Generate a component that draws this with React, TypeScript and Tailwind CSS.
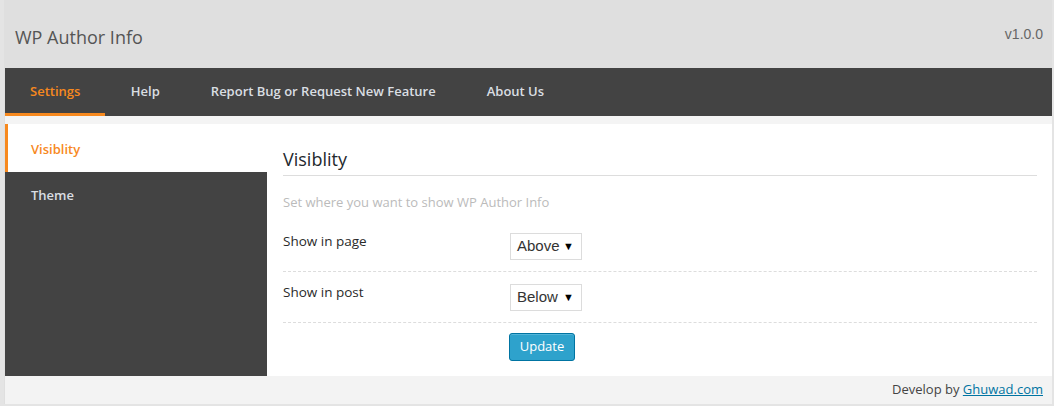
import React from "react";

const navItems = ["Settings", "Help", "Report Bug or Request New Feature", "About Us"];

function FakeSelect({ value }: { value: string }) {
  return (
    <div className="flex h-[27px] w-[72px] items-center justify-between border border-[#dcdcdc] bg-white pl-[6px] pr-[7px] font-['Liberation_Sans',Arial,sans-serif] text-[15px] text-[#333]">
      <span>{value}</span>
      <span className="text-[11px] leading-none text-black">▼</span>
    </div>
  );
}

export default function App() {
  return (
    <div className="h-[408px] w-[1055px] bg-white font-['Open_Sans',sans-serif]">
      <div className="h-[406px] w-[1054px] border-b-2 border-l-[4px] border-r-[2px] border-[#e4e4e4] bg-[#dfdfdf]">
        {/* header */}
        <div className="flex h-[68px] items-center justify-between pl-[11px] pr-[9px]">
          <h1 className="pt-[6px] text-[18px] text-[#555]">WP Author Info</h1>
          <span className="font-['Liberation_Sans',Arial,sans-serif] text-[14px] text-[#666]">v1.0.0</span>
        </div>

        {/* tabs */}
        <nav className="ml-px flex h-[48px] bg-[#434343]">
          {navItems.map((item, i) => (
            <div
              key={item}
              className={
                i === 0
                  ? "flex items-center border-b-[3px] border-[#f7891e] px-[25px] pt-[3px] text-[13px] font-semibold text-[#f7891e]"
                  : "flex items-center px-[25.5px] text-[13px] font-semibold text-[#dadee2]"
              }
            >
              {item}
            </div>
          ))}
        </nav>

        <div className="ml-px bg-[#f4f4f4] pt-[8px]">
          <div className="flex h-[252px]">
            {/* sidebar */}
            <aside className="w-[262px] bg-[#434343]">
              <div className="flex h-[48px] items-center border-l-[3px] border-[#f7891e] bg-white pl-[23px] pt-[4px] text-[13px] font-semibold text-[#f7891e]">
                Visiblity
              </div>
              <div className="flex h-[46px] items-center pl-[26px] pt-[2px] text-[13px] font-semibold text-[#dadee2]">
                Theme
              </div>
            </aside>

            {/* content */}
            <main className="flex-1 bg-white pl-[16px] pr-[15px] pt-[22px]">
              <h2 className="border-b border-[#dddddd] pb-[3px] text-[18px] font-medium leading-[26px] text-[#23282d]">
                Visiblity
              </h2>
              <p className="mt-[16px] text-[13px] leading-[20px] text-[#bbbbbb]">
                Set where you want to show WP Author Info
              </p>

              <div className="mt-[9px] flex h-[51px] border-b border-dashed border-[#dddddd]">
                <div className="w-[227px] pt-[10px] text-[13.5px] leading-[20px] text-[#2a2a2a]">Show in page</div>
                <div className="pt-[12px]">
                  <FakeSelect value="Above" />
                </div>
              </div>
              <div className="flex h-[51px] border-b border-dashed border-[#dddddd]">
                <div className="w-[227px] pt-[10px] text-[13.5px] leading-[20px] text-[#2a2a2a]">Show in post</div>
                <div className="pt-[12px]">
                  <FakeSelect value="Below" />
                </div>
              </div>
              <div className="flex pl-[226px] pt-[10px]">
                <button className="h-[28px] w-[66px] rounded-[3px] border border-[#0074a2] bg-[#2ea2cc] text-[13px] text-white shadow-[inset_0_1px_0_rgba(120,200,230,0.5)]">
                  Update
                </button>
              </div>
            </main>
          </div>

          {/* footer */}
          <div className="flex h-[28px] items-center justify-end bg-[#f3f3f3] pr-[9px] text-[13px] text-[#444]">
            Develop by&nbsp;<a className="text-[#0074a2] underline">Ghuwad.com</a>
          </div>
        </div>
      </div>
    </div>
  );
}
